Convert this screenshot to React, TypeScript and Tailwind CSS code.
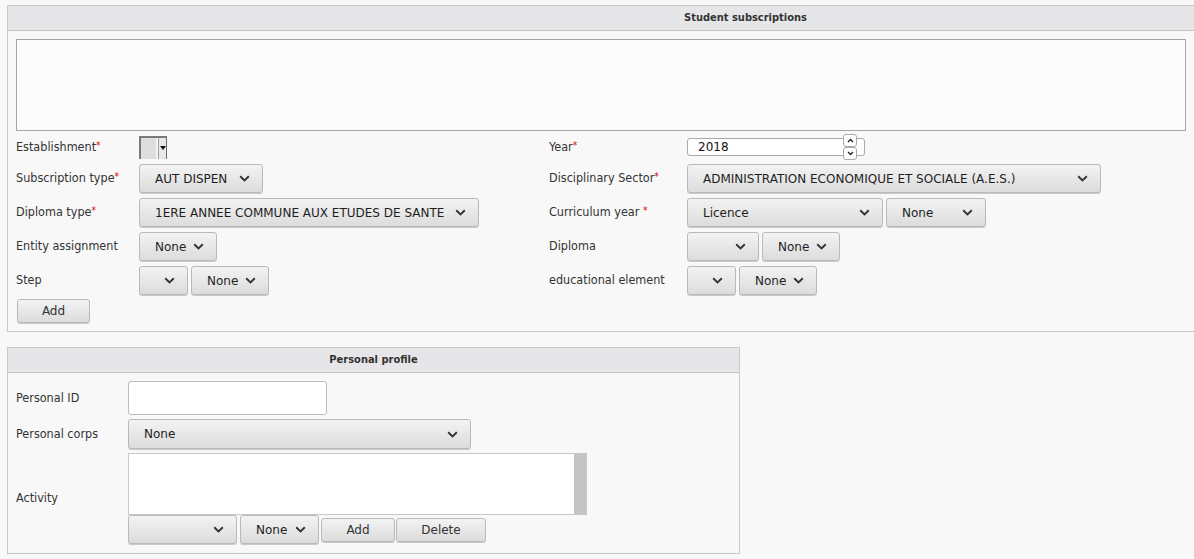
import React from "react";

const Chevron = () => (
  <svg width="11" height="7" viewBox="0 0 11 7" className="shrink-0 text-[#333]">
    <path d="M1.2 1.2l4.3 4.2 4.3-4.2" fill="none" stroke="currentColor" strokeWidth="1.9" />
  </svg>
);

function Select({ w, text, h = "h-[29px]" }: { w: string; text?: string; h?: string }) {
  return (
    <div
      className={`${w} ${h} flex items-center justify-between pl-[15px] pr-[12px] rounded-[3px] border border-[#b9b9b9] bg-gradient-to-b from-[#f3f3f3] to-[#dcdcdc] shadow-[0_1px_0_#c9c9c9] text-[12px] text-[#1e1e1e] font-['DejaVu_Sans',sans-serif] whitespace-nowrap`}
    >
      <span>{text}</span>
      <Chevron />
    </div>
  );
}

function Btn({ w, text }: { w: string; text: string }) {
  return (
    <div
      className={`${w} h-[24px] flex items-center justify-center rounded-[3px] border border-[#b9b9b9] bg-gradient-to-b from-[#f3f3f3] to-[#dcdcdc] shadow-[0_1px_0_#c9c9c9] text-[12px] text-[#333] font-['DejaVu_Sans',sans-serif]`}
    >
      {text}
    </div>
  );
}

const Req = () => <span className="text-[#e00000] text-[10px] align-top">*</span>;

function Label({ w, children }: { w: string; children: React.ReactNode }) {
  return (
    <div className={`${w} shrink-0 text-[12.5px] text-[#333] font-['DejaVu_Sans_Condensed','DejaVu_Sans',sans-serif] font-stretch-condensed whitespace-nowrap`}>
      {children}
    </div>
  );
}

function Row({ children, h = "h-[29px]" }: { children: React.ReactNode; h?: string }) {
  return <div className={`${h} flex items-center`}>{children}</div>;
}

export default function App() {
  return (
    <div className="min-h-screen bg-[#f8f8f8] overflow-hidden pt-[5px] pl-[7px]">
      {/* Student subscriptions */}
      <div className="w-[1477px] border border-[#c8c8c8] bg-[#f8f8f8]">
        <div className="h-[25px] bg-[#e6e6e8] border-b border-[#c2c2c2] flex items-center justify-center text-[11px] font-bold text-[#333] font-['DejaVu_Sans_Condensed','DejaVu_Sans',sans-serif] font-stretch-condensed">
          Student subscriptions
        </div>
        <div className="pl-[8px] pt-[8px] pb-[8px]">
          <div className="w-[1170px] h-[92px] border border-[#a5a5a5] bg-[#fcfcfc]" />
          <div className="mt-[4px] flex">
            {/* left column */}
            <div className="w-[533px] flex flex-col gap-[5px]">
              <Row h="h-[24px]">
                <Label w="w-[123px]">Establishment<Req /></Label>
                <div className="w-[28px] h-[23px] flex border-t-2 border-l-2 border-[#7a7a7a] border-r border-r-[#6a6a6a] bg-[#dcdcdc]">
                  <div className="w-[15px] bg-[#dedede]" />
                  <div className="w-[2px] bg-[#f4f4f4]" />
                  <div className="flex-1 flex items-center justify-center bg-[#e8e8e8] border-l border-[#a0a0a0]">
                    <svg width="6" height="4" viewBox="0 0 6 4">
                      <path d="M0 0h6L3 4z" fill="#111" />
                    </svg>
                  </div>
                </div>
              </Row>
              <Row>
                <Label w="w-[123px]">Subscription type<Req /></Label>
                <Select w="w-[124px]" text="AUT DISPEN" />
              </Row>
              <Row>
                <Label w="w-[123px]">Diploma type<Req /></Label>
                <Select w="w-[340px]" text="1ERE ANNEE COMMUNE AUX ETUDES DE SANTE" />
              </Row>
              <Row>
                <Label w="w-[123px]">Entity assignment</Label>
                <Select w="w-[78px]" text="None" />
              </Row>
              <Row>
                <Label w="w-[123px]">Step</Label>
                <div className="flex gap-[3px]">
                  <Select w="w-[49px]" />
                  <Select w="w-[78px]" text="None" />
                </div>
              </Row>
              <div className="mt-[-1px] ml-[1px]">
                <Btn w="w-[73px]" text="Add" />
              </div>
            </div>
            {/* right column */}
            <div className="flex flex-col gap-[5px]">
              <Row h="h-[24px]">
                <Label w="w-[138px]">Year<Req /></Label>
                <div className="relative w-[178px] h-[18px] rounded-[3px] border border-[#a8a8a8] bg-white flex items-center pl-[10px] text-[12px] text-[#111] font-['DejaVu_Sans',sans-serif]">
                  2018
                  <div className="absolute left-[155px] top-[-5px] w-[14px] flex flex-col">
                    <div className="h-[13px] rounded-[3px] border border-[#a8a8a8] bg-white flex items-center justify-center">
                      <svg width="7" height="5" viewBox="0 0 7 5"><path d="M1 4l2.5-2.5L6 4" fill="none" stroke="#222" strokeWidth="1.3" /></svg>
                    </div>
                    <div className="h-[13px] rounded-[3px] border border-[#a8a8a8] bg-white flex items-center justify-center">
                      <svg width="7" height="5" viewBox="0 0 7 5"><path d="M1 1l2.5 2.5L6 1" fill="none" stroke="#222" strokeWidth="1.3" /></svg>
                    </div>
                  </div>
                </div>
              </Row>
              <Row>
                <Label w="w-[138px]">Disciplinary Sector<Req /></Label>
                <Select w="w-[414px]" text="ADMINISTRATION ECONOMIQUE ET SOCIALE (A.E.S.)" />
              </Row>
              <Row>
                <Label w="w-[138px]">Curriculum year <Req /></Label>
                <div className="flex gap-[3px]">
                  <Select w="w-[196px]" text="Licence" />
                  <Select w="w-[100px]" text="None" />
                </div>
              </Row>
              <Row>
                <Label w="w-[138px]">Diploma</Label>
                <div className="flex gap-[3px]">
                  <Select w="w-[72px]" />
                  <Select w="w-[78px]" text="None" />
                </div>
              </Row>
              <Row>
                <Label w="w-[138px]">educational element</Label>
                <div className="flex gap-[3px]">
                  <Select w="w-[49px]" />
                  <Select w="w-[78px]" text="None" />
                </div>
              </Row>
            </div>
          </div>
        </div>
      </div>

      {/* Personal profile */}
      <div className="mt-[15px] w-[733px] border border-[#c8c8c8] bg-[#f8f8f8]">
        <div className="h-[25px] bg-[#e6e6e8] border-b border-[#c2c2c2] flex items-center justify-center text-[11px] font-bold text-[#333] font-['DejaVu_Sans_Condensed','DejaVu_Sans',sans-serif] font-stretch-condensed">
          Personal profile
        </div>
        <div className="pl-[8px] pt-[8px] pb-[9px] flex flex-col gap-[4px]">
          <div className="h-[34px] flex items-center">
            <Label w="w-[112px]">Personal ID</Label>
            <div className="w-[199px] h-[34px] rounded-[3px] border border-[#bcbcbc] bg-white" />
          </div>
          <div className="h-[30px] flex items-center">
            <Label w="w-[112px]">Personal corps</Label>
            <Select w="w-[343px]" h="h-[30px]" text="None" />
          </div>
          <div className="flex items-center">
            <Label w="w-[112px]">Activity</Label>
            <div className="flex flex-col">
              <div className="w-[459px] h-[62px] border border-[#c8c8c8] bg-white flex justify-end">
                <div className="w-[12px] bg-[#c4c4c4]" />
              </div>
              <div className="flex items-center">
                <Select w="w-[109px]" />
                <div className="ml-[3px]"><Select w="w-[79px]" text="None" /></div>
                <div className="ml-[2px]"><Btn w="w-[74px]" text="Add" /></div>
                <div className="ml-[1px]"><Btn w="w-[90px]" text="Delete" /></div>
              </div>
            </div>
          </div>
        </div>
      </div>
    </div>
  );
}
